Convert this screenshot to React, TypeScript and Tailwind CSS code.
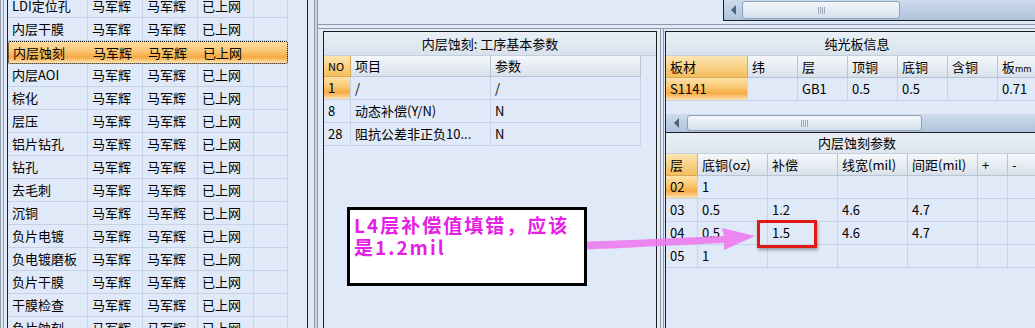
const font = "font-['Noto_Sans_CJK_SC',sans-serif]";

const steps = [
  "LDI定位孔", "内层干膜", "内层蚀刻", "内层AOI", "棕化", "层压", "铝片钻孔", "钻孔",
  "去毛刺", "沉铜", "负片电镀", "负电镀磨板", "负片干膜", "干膜检查", "负片蚀刻",
];

const params = [
  ["1", "/", "/"],
  ["8", "动态补偿(Y/N)", "N"],
  ["28", "阻抗公差非正负10...", "N"],
];

const layers = [
  ["02", "1", "", "", "", "", ""],
  ["03", "0.5", "1.2", "4.6", "4.7", "", ""],
  ["04", "0.5", "1.5", "4.6", "4.7", "", ""],
  ["05", "1", "", "", "", "", ""],
];

const layerCols = ["w-[32px]", "w-[70px]", "w-[70px]", "w-[70px]", "w-[70px]", "w-[30px]", "w-[30px]"];
const boardCols = ["w-[82px]", "w-[50px]", "w-[50px]", "w-[50px]", "w-[50px]", "w-[50px]", "w-[50px]"];

function HScroll({ lead, thumb }: { lead: string; thumb: string }) {
  return (
    <div className="flex h-full w-full items-stretch bg-[linear-gradient(180deg,#cddbec,#afc3dc)]">
      <div className={`${lead} flex shrink-0 items-center justify-center`}>
        <div className="h-0 w-0 border-y-[5px] border-r-[5px] border-y-transparent border-r-[#52647c]" />
      </div>
      <div className={`${thumb} my-[1px] flex shrink-0 items-center justify-center rounded-[3px] border border-[#8ea3bd] bg-[linear-gradient(180deg,#f4f7fb,#d6e0eb)]`}>
        <div className="flex gap-[1px]">
          <div className="h-[7px] w-[1px] bg-[#9aa9bc]" />
          <div className="h-[7px] w-[1px] bg-[#9aa9bc]" />
          <div className="h-[7px] w-[1px] bg-[#9aa9bc]" />
          <div className="h-[7px] w-[1px] bg-[#9aa9bc]" />
        </div>
      </div>
      <div className="flex-1" />
      <div className="flex w-[8px] shrink-0 items-center justify-end">
        <div className="h-0 w-0 border-y-[5px] border-l-[5px] border-y-transparent border-l-[#52647c]" />
      </div>
    </div>
  );
}

const headCell = "flex h-full shrink-0 items-center border-r border-b border-[#b7c4d4] bg-[linear-gradient(180deg,#f5f8fb,#d8e1eb)] px-[4px]";
const headOrange = "flex h-full shrink-0 items-center border-r border-b border-[#d9a95a] bg-[linear-gradient(180deg,#fde6b2,#f5bd5c)] px-[4px]";
const cell = "flex h-full shrink-0 items-center border-r border-b border-[#c6d3e4] px-[4px] whitespace-nowrap overflow-hidden";
const orangeCell = "flex h-full shrink-0 items-center border-r border-b border-[#c6d3e4] px-[4px] bg-[linear-gradient(180deg,#fde2a8,#f9c56f_45%,#f6ab44_70%,#fde4b4)]";

export default function App() {
  return (
    <div className={`${font} relative flex h-[328px] w-[1035px] overflow-hidden bg-[#dfe9f8] text-[13px] text-black`}>
      {/* left step list */}
      <div className="flex h-full w-[308px] shrink-0">
        <div className="w-[1px] bg-[#8e9aa8]" />
        <div className="w-[2px]" />
        <div className="w-[1px] bg-[#8e9aa8]" />
        <div className="w-[3px]" />
        <div className="w-[1px] bg-[#1e1e1e]" />
        <div className="-mt-[5px] flex-1">
          {steps.map((s, i) => (
            <div
              key={i}
              className={
                i === 2
                  ? "flex h-[23px] w-[280px] rounded-[2px] border border-dotted border-black bg-[linear-gradient(180deg,#fddca2,#f9c571_45%,#f6a940_72%,#fde4b6)]"
                  : "flex h-[23px] w-[280px]"
              }
            >
              {[s, "马军辉", "马军辉", "已上网", ""].map((t, j) => (
                <div
                  key={j}
                  className={`${["w-[80px]", "w-[55px]", "w-[55px]", "w-[56px]", "w-[34px]"][j]} flex h-full shrink-0 items-center px-[4px] ${i === 2 ? "" : "border-r border-b border-[#c6d3e4]"}`}
                >
                  {t}
                </div>
              ))}
            </div>
          ))}
        </div>
        <div className="w-[1px] bg-[#1e1e1e]" />
      </div>

      {/* splitter */}
      <div className="w-[6px] shrink-0" />
      <div className="w-[4px] shrink-0 border-x border-[#8d99a7] bg-[#c9d3de]" />

      {/* right area */}
      <div className="flex h-full flex-1 flex-col">
        <div className="flex h-[25px] shrink-0 border-b border-[#8d99a7]">
          <div className="w-[405px] shrink-0" />
          <div className="h-[21px] flex-1 border-b border-l border-[#1e1e1e]">
            <HScroll lead="w-[18px]" thumb="w-[158px]" />
          </div>
        </div>
        <div className="h-[3px] shrink-0" />

        <div className="flex flex-1">
          {/* process parameter panel */}
          <div className="flex w-[342px] shrink-0 border-t border-[#8d99a7] pt-[2px] pr-[3px] pl-[5px]">
            <div className="flex-1 border-t border-x border-[#1e1e1e]">
              <div className="flex h-[24px] items-center justify-center border-b border-[#c3cfdd] bg-[linear-gradient(180deg,#e9eff6,#d9e2ec)]">
                内层蚀刻: 工序基本参数
              </div>
              <div className="flex h-[21px]">
                <div className={`${headOrange} w-[27px] text-[11px]`}>NO</div>
                <div className={`${headCell} w-[140px]`}>项目</div>
                <div className={`${headCell} w-[150px]`}>参数</div>
              </div>
              {params.map((r, i) => (
                <div key={i} className="flex h-[23px]">
                  <div className={`${i === 0 ? orangeCell : cell} w-[27px]`}>{r[0]}</div>
                  <div className={`${cell} w-[140px]`}>{r[1]}</div>
                  <div className={`${cell} w-[150px]`}>{r[2]}</div>
                </div>
              ))}
            </div>
          </div>

          {/* board info panel */}
          <div className="flex flex-1 border-t border-l border-[#8d99a7] pl-[2px]">
            <div className="flex flex-1 border-l border-[#8d99a7] pt-[2px] pl-[1px]">
              <div className="flex-1 overflow-hidden border-t border-l border-[#1e1e1e]">
                <div className="flex h-[24px] items-center justify-center border-b border-[#c3cfdd] bg-[linear-gradient(180deg,#e9eff6,#d9e2ec)]">
                  纯光板信息
                </div>
                <div className="flex h-[22px]">
                  {["板材", "纬", "层", "顶铜", "底铜", "含铜"].map((h, j) => (
                    <div key={j} className={`${j === 0 ? headOrange : headCell} ${boardCols[j]}`}>
                      {h}
                    </div>
                  ))}
                  <div className={`${headCell} w-[50px]`}>
                    <span>
                      板<span className="text-[9px]">mm</span>
                    </span>
                  </div>
                </div>
                <div className="flex h-[23px]">
                  {["S1141", "", "GB1", "0.5", "0.5", "", "0.71"].map((t, j) => (
                    <div key={j} className={`${j === 0 ? orangeCell : cell} ${boardCols[j]}`}>
                      {t}
                    </div>
                  ))}
                </div>
                <div className="h-[13px]" />
                <div className="h-[19px] border-b border-[#1e1e1e]">
                  <HScroll lead="w-[21px]" thumb="w-[235px]" />
                </div>
                <div className="flex h-[21px] items-center justify-center border-b border-[#c3cfdd] bg-[linear-gradient(180deg,#e9eff6,#dde5ee)]">
                  内层蚀刻参数
                </div>
                <div className="flex h-[22px]">
                  {["层", "底铜(oz)", "补偿", "线宽(mil)", "间距(mil)", "+", "-"].map((h, j) => (
                    <div key={j} className={`${j === 0 ? headOrange : headCell} ${layerCols[j]}`}>
                      {h}
                    </div>
                  ))}
                </div>
                {layers.map((r, i) => (
                  <div key={i} className="flex h-[23px]">
                    {r.map((t, j) => (
                      <div key={j} className={`${j === 0 && i === 0 ? orangeCell : cell} ${layerCols[j]}`}>
                        {t}
                      </div>
                    ))}
                  </div>
                ))}
              </div>
            </div>
          </div>
        </div>
      </div>

      {/* annotation overlay */}
      <svg className="pointer-events-none absolute top-0 left-0" width="1035" height="328">
        <path
          d="M556 243 C600 241 660 239 724 236 L722 228 L755 236 L724 250 L724 243 C660 246 600 249 556 251 C550 251 550 243 556 243 Z"
          fill="#ee77ee"
          fillOpacity="0.88"
        />
      </svg>
      <div className="absolute top-[207px] left-[347px] h-[79px] w-[240px] border-[3px] border-black bg-white px-[4px] pt-[4px] text-[19px] leading-[22px] font-bold tracking-[2px] text-[#e61ee6]">
        L4层补偿值填错，应该
        <br />
        是1.2mil
      </div>
      <div className="absolute top-[220px] left-[757px] h-[28px] w-[60px] border-[3px] border-[#e01818] shadow-[1px_2px_3px_rgba(0,0,0,0.35)]" />
    </div>
  );
}
